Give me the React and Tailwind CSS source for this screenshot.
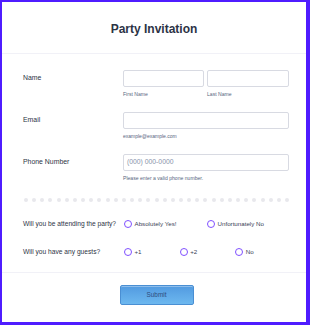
import React from "react";

const font = { fontFamily: '"Liberation Sans", Arial, sans-serif' };

function Radio({ label }) {
  return (
    <div className="flex items-center gap-[2.5px]">
      <span className="w-[8px] h-[8px] rounded-full border-[1.3px] border-[#8050ff] bg-white shrink-0" />
      <span className="text-[6.2px] leading-[8px] text-[#3a4256]">{label}</span>
    </div>
  );
}

export default function App() {
  const dots = Array.from({ length: 33 });
  return (
    <div className="w-[310px] h-[325px] bg-[#4f1cff] pl-[2px] pt-[2px] pr-[4px] pb-[3px]" style={font}>
      <div className="bg-white h-full flex flex-col">
        <div className="h-[52px] pt-[2px] flex items-center justify-center border-b border-[#f1f1f7]">
          <h1 className="text-[12px] font-bold text-[#2c3345] leading-none">Party Invitation</h1>
        </div>

        <div className="pl-[21px] pt-[16px] pb-[16px] border-b border-[#f1f1f7]">
          {/* Name */}
          <div className="flex">
            <div className="w-[100px] h-[17px] flex items-center text-[6.9px] text-[#2c3345]">Name</div>
            <div className="w-[166px] grid grid-cols-[81px_82px] gap-[3px]">
              <div>
                <div className="h-[17px] rounded-[2px] border border-[#d8dae2] bg-white" />
                <div className="mt-[4px] text-[5.1px] leading-[7px] text-[#57647e]">First Name</div>
              </div>
              <div>
                <div className="h-[17px] rounded-[2px] border border-[#d8dae2] bg-white" />
                <div className="mt-[4px] text-[5.1px] leading-[7px] text-[#57647e]">Last Name</div>
              </div>
            </div>
          </div>

          {/* Email */}
          <div className="flex mt-[14px]">
            <div className="w-[100px] h-[17px] flex items-center text-[6.9px] text-[#2c3345]">Email</div>
            <div className="w-[166px]">
              <div className="h-[17px] rounded-[2px] border border-[#d8dae2] bg-white" />
              <div className="mt-[4px] text-[5px] leading-[7px] text-[#57647e]">example@example.com</div>
            </div>
          </div>

          {/* Phone */}
          <div className="flex mt-[14px]">
            <div className="w-[100px] h-[17px] flex items-center text-[6.9px] text-[#2c3345]">Phone Number</div>
            <div className="w-[166px]">
              <div className="h-[17px] rounded-[2px] border border-[#d8dae2] bg-white flex items-center pl-[3px] text-[6.8px] text-[#8894ab]">
                (000) 000-0000
              </div>
              <div className="mt-[4px] text-[5.1px] leading-[7px] text-[#57647e]">Please enter a valid phone number.</div>
            </div>
          </div>

          {/* Dots */}
          <div className="mt-[16px] w-[266px] flex justify-between pl-[1px]">
            {dots.map((_, i) => (
              <span key={i} className="w-[4px] h-[4px] rounded-full bg-[#e8e8ec]" />
            ))}
          </div>

          {/* Attending */}
          <div className="flex items-center mt-[17px] h-[9px]">
            <div className="w-[101px] text-[6.65px] text-[#2c3345] whitespace-nowrap">Will you be attending the party?</div>
            <div className="w-[166px] grid grid-cols-2">
              <Radio label="Absolutely Yes!" />
              <Radio label="Unfortunately No" />
            </div>
          </div>

          {/* Guests */}
          <div className="flex items-center mt-[19px] h-[9px]">
            <div className="w-[101px] text-[6.65px] text-[#2c3345] whitespace-nowrap">Will you have any guests?</div>
            <div className="w-[167px] grid grid-cols-3">
              <Radio label="+1" />
              <Radio label="+2" />
              <Radio label="No" />
            </div>
          </div>
        </div>

        <div className="pt-[12px] flex justify-center">
          <button className="ml-[5px] w-[74px] h-[20px] rounded-[2px] border border-[#4a8fd3] bg-gradient-to-b from-[#529ae0] to-[#6db8ef] shadow-[inset_0_1px_0_rgba(255,255,255,0.35)] text-[6.4px] text-[#2e4c7c]">
            Submit
          </button>
        </div>
      </div>
    </div>
  );
}
